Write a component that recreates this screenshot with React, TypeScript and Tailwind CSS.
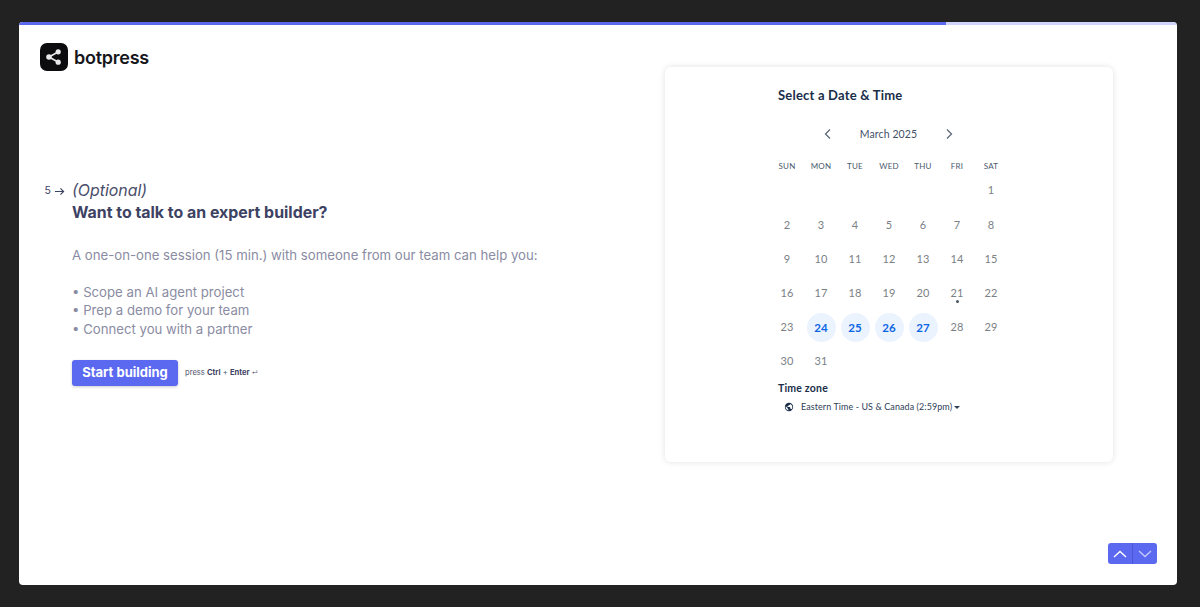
const inter = { fontFamily: '"Inter", "Liberation Sans", sans-serif' };
const cal = { fontFamily: '"Lato", "Open Sans", sans-serif' };

const days: (number | null)[][] = [
  [null, null, null, null, null, null, 1],
  [2, 3, 4, 5, 6, 7, 8],
  [9, 10, 11, 12, 13, 14, 15],
  [16, 17, 18, 19, 20, 21, 22],
  [23, 24, 25, 26, 27, 28, 29],
  [30, 31, null, null, null, null, null],
];
const active = [24, 25, 26, 27];

function Logo() {
  return (
    <div className="flex items-center gap-[6px]">
      <div className="w-[28px] h-[28px] rounded-[7px] bg-[#0c0c0f] flex items-center justify-center">
        <svg width="20" height="20" viewBox="0 0 20 20" fill="#e8e8ea" stroke="#e8e8ea">
          <path d="M5 10 L14 5 M5 10 L14 15" strokeWidth="1.6" fill="none" />
          <circle cx="5" cy="10" r="2.8" stroke="none" />
          <circle cx="14.2" cy="4.8" r="2.6" stroke="none" />
          <circle cx="14.2" cy="15.2" r="2.6" stroke="none" />
        </svg>
      </div>
      <span className="text-[18px] font-semibold text-[#17171b] tracking-[-0.25px] leading-none mt-[1px]" style={inter}>botpress</span>
    </div>
  );
}

function Calendar() {
  return (
    <div className="w-[448px] h-[395px] rounded-[6px] bg-white shadow-[0_0_6px_rgba(0,0,0,0.12)] pt-[20px] pl-[113px]" style={cal}>
      <div className="text-[13px] font-bold text-[#1a2e4a] leading-[16px] tracking-[0.2px]">Select a Date &amp; Time</div>
      <div className="flex items-center h-[20px] mt-[21px] w-[238px] pl-[44px] text-[#3f5168]">
        <svg width="12" height="12" viewBox="0 0 12 12" fill="none" stroke="#5f6b78" strokeWidth="1.3"><path d="M8 1.5 L3.5 6 L8 10.5" /></svg>
        <span className="w-[109px] text-center text-[10.5px] tracking-[0.1px] pt-[2px]">March 2025</span>
        <svg width="12" height="12" viewBox="0 0 12 12" fill="none" stroke="#5f6b78" strokeWidth="1.3"><path d="M4 1.5 L8.5 6 L4 10.5" /></svg>
      </div>
      <div className="grid grid-cols-[repeat(7,34px)] -ml-[8px] mt-[12px] h-[20px] items-center text-center text-[8px] text-[#4a5a6e] tracking-[0.2px]">
        {["SUN", "MON", "TUE", "WED", "THU", "FRI", "SAT"].map((d) => <div key={d}>{d}</div>)}
      </div>
      <div className="grid grid-cols-[repeat(7,34px)] auto-rows-[34.2px] -ml-[8px] -mt-[2.5px] text-[11px] text-center text-[#7b7f86]">
        {days.flat().map((d, i) => (
          <div key={i} className="relative flex items-center justify-center">
            {d !== null && (
              active.includes(d) ? (
                <div className="w-[29px] h-[29px] rounded-full bg-[#ebf3fe] text-[#0b66e4] font-bold flex items-center justify-center text-[11.5px]">{d}</div>
              ) : (
                <span>{d}</span>
              )
            )}
            {d === 21 && <div className="absolute w-[3px] h-[3px] rounded-full bg-[#4a5563] bottom-[7px]" />}
          </div>
        ))}
      </div>
      <div className="mt-[3.5px] text-[10.5px] font-bold text-[#1a2e4a] leading-[13px] tracking-[0.2px]">Time zone</div>
      <div className="flex items-center mt-[5px] ml-[6px] text-[#2e4057] text-[8.95px] leading-[14px]">
        <svg width="10" height="10" viewBox="0 0 24 24" fill="#1a2e4a"><path d="M12 2a10 10 0 1 0 0 20 10 10 0 0 0 0-20Zm-1 17.9A8 8 0 0 1 4.2 10.2L9 15v1a2 2 0 0 0 2 2v1.9Zm6.9-2.5A2 2 0 0 0 16 16h-1v-3a1 1 0 0 0-1-1H8v-2h2a1 1 0 0 0 1-1V7h2a2 2 0 0 0 2-2v-.4a8 8 0 0 1 2.9 12.8Z" /></svg>
        <span className="ml-[7px] tracking-[0.1px]">Eastern Time - US &amp; Canada (2:59pm)</span>
        <span className="ml-[2px] w-0 h-0 border-l-[3px] border-r-[3px] border-t-[3px] border-l-transparent border-r-transparent border-t-[#2e4057]" />
      </div>
    </div>
  );
}

function Question() {
  return (
    <div className="flex" style={inter}>
      <div className="w-[53px] flex justify-end items-center h-[20px] gap-[3px] text-[#3d4263] pr-[7px]">
        <span className="text-[10.5px]">5</span>
        <svg width="11" height="11" viewBox="0 0 12 12" fill="none" stroke="#3d4263" strokeWidth="1.2"><path d="M1 6 H10.5 M7 2.5 L10.5 6 L7 9.5" /></svg>
      </div>
      <div>
        <div className="text-[15.9px] italic text-[#4a4e6b] leading-[20px]">(Optional)</div>
        <div className="text-[15.9px] font-bold text-[#3d4263] leading-[22px] mt-[1px]">Want to talk to an expert builder?</div>
        <div className="text-[13.2px] text-[#8a8ca3] leading-[18.5px] mt-[22px]">
          <p>A one-on-one session (15 min.) with someone from our team can help you:</p>
          <p className="mt-[18px]">• Scope an AI agent project</p>
          <p>• Prep a demo for your team</p>
          <p>• Connect you with a partner</p>
        </div>
        <div className="flex items-center mt-[22px]">
          <div className="w-[106px] h-[26px] rounded-[3px] bg-[#5b68f0] text-white text-[13px] font-bold flex items-center justify-center shadow-[0_1px_3px_rgba(0,0,0,0.2)]">Start building</div>
          <div className="ml-[7px] text-[7.6px] text-[#50536d] whitespace-nowrap">press <b className="text-[#3d4263]">Ctrl</b> + <b className="text-[#3d4263]">Enter</b> <span className="text-[6px]">↵</span></div>
        </div>
      </div>
    </div>
  );
}

export default function App() {
  return (
    <div className="w-[1200px] h-[607px] bg-[#222222] pt-[22px] pl-[19px] overflow-hidden">
      <div className="relative w-[1158px] h-[563px] bg-white rounded-[4px] overflow-hidden flex flex-col">
        <div className="h-[3px] bg-[#d0d3fa] shrink-0">
          <div className="h-full w-[927px] bg-[#5b68f0]" />
        </div>
        <div className="flex">
          <div className="w-[646px] shrink-0">
            <div className="pl-[21px] pt-[18px]"><Logo /></div>
            <div className="pt-[110px]"><Question /></div>
          </div>
          <div className="pt-[42px]"><Calendar /></div>
        </div>
        <div className="absolute right-[20px] bottom-[21px] flex h-[21px] rounded-[3px] overflow-hidden">
          <div className="w-[25px] bg-[#5b68f0] border-r border-[#4a56d6] flex items-center justify-center">
            <svg width="14" height="8" viewBox="0 0 14 8" fill="none" stroke="#ffffff" strokeWidth="1.4"><path d="M1 7 L7 1.5 L13 7" /></svg>
          </div>
          <div className="w-[24px] bg-[#5b68f0] flex items-center justify-center">
            <svg width="14" height="8" viewBox="0 0 14 8" fill="none" stroke="#c3c8fa" strokeWidth="1.4"><path d="M1 1 L7 6.5 L13 1" /></svg>
          </div>
        </div>
      </div>
    </div>
  );
}
